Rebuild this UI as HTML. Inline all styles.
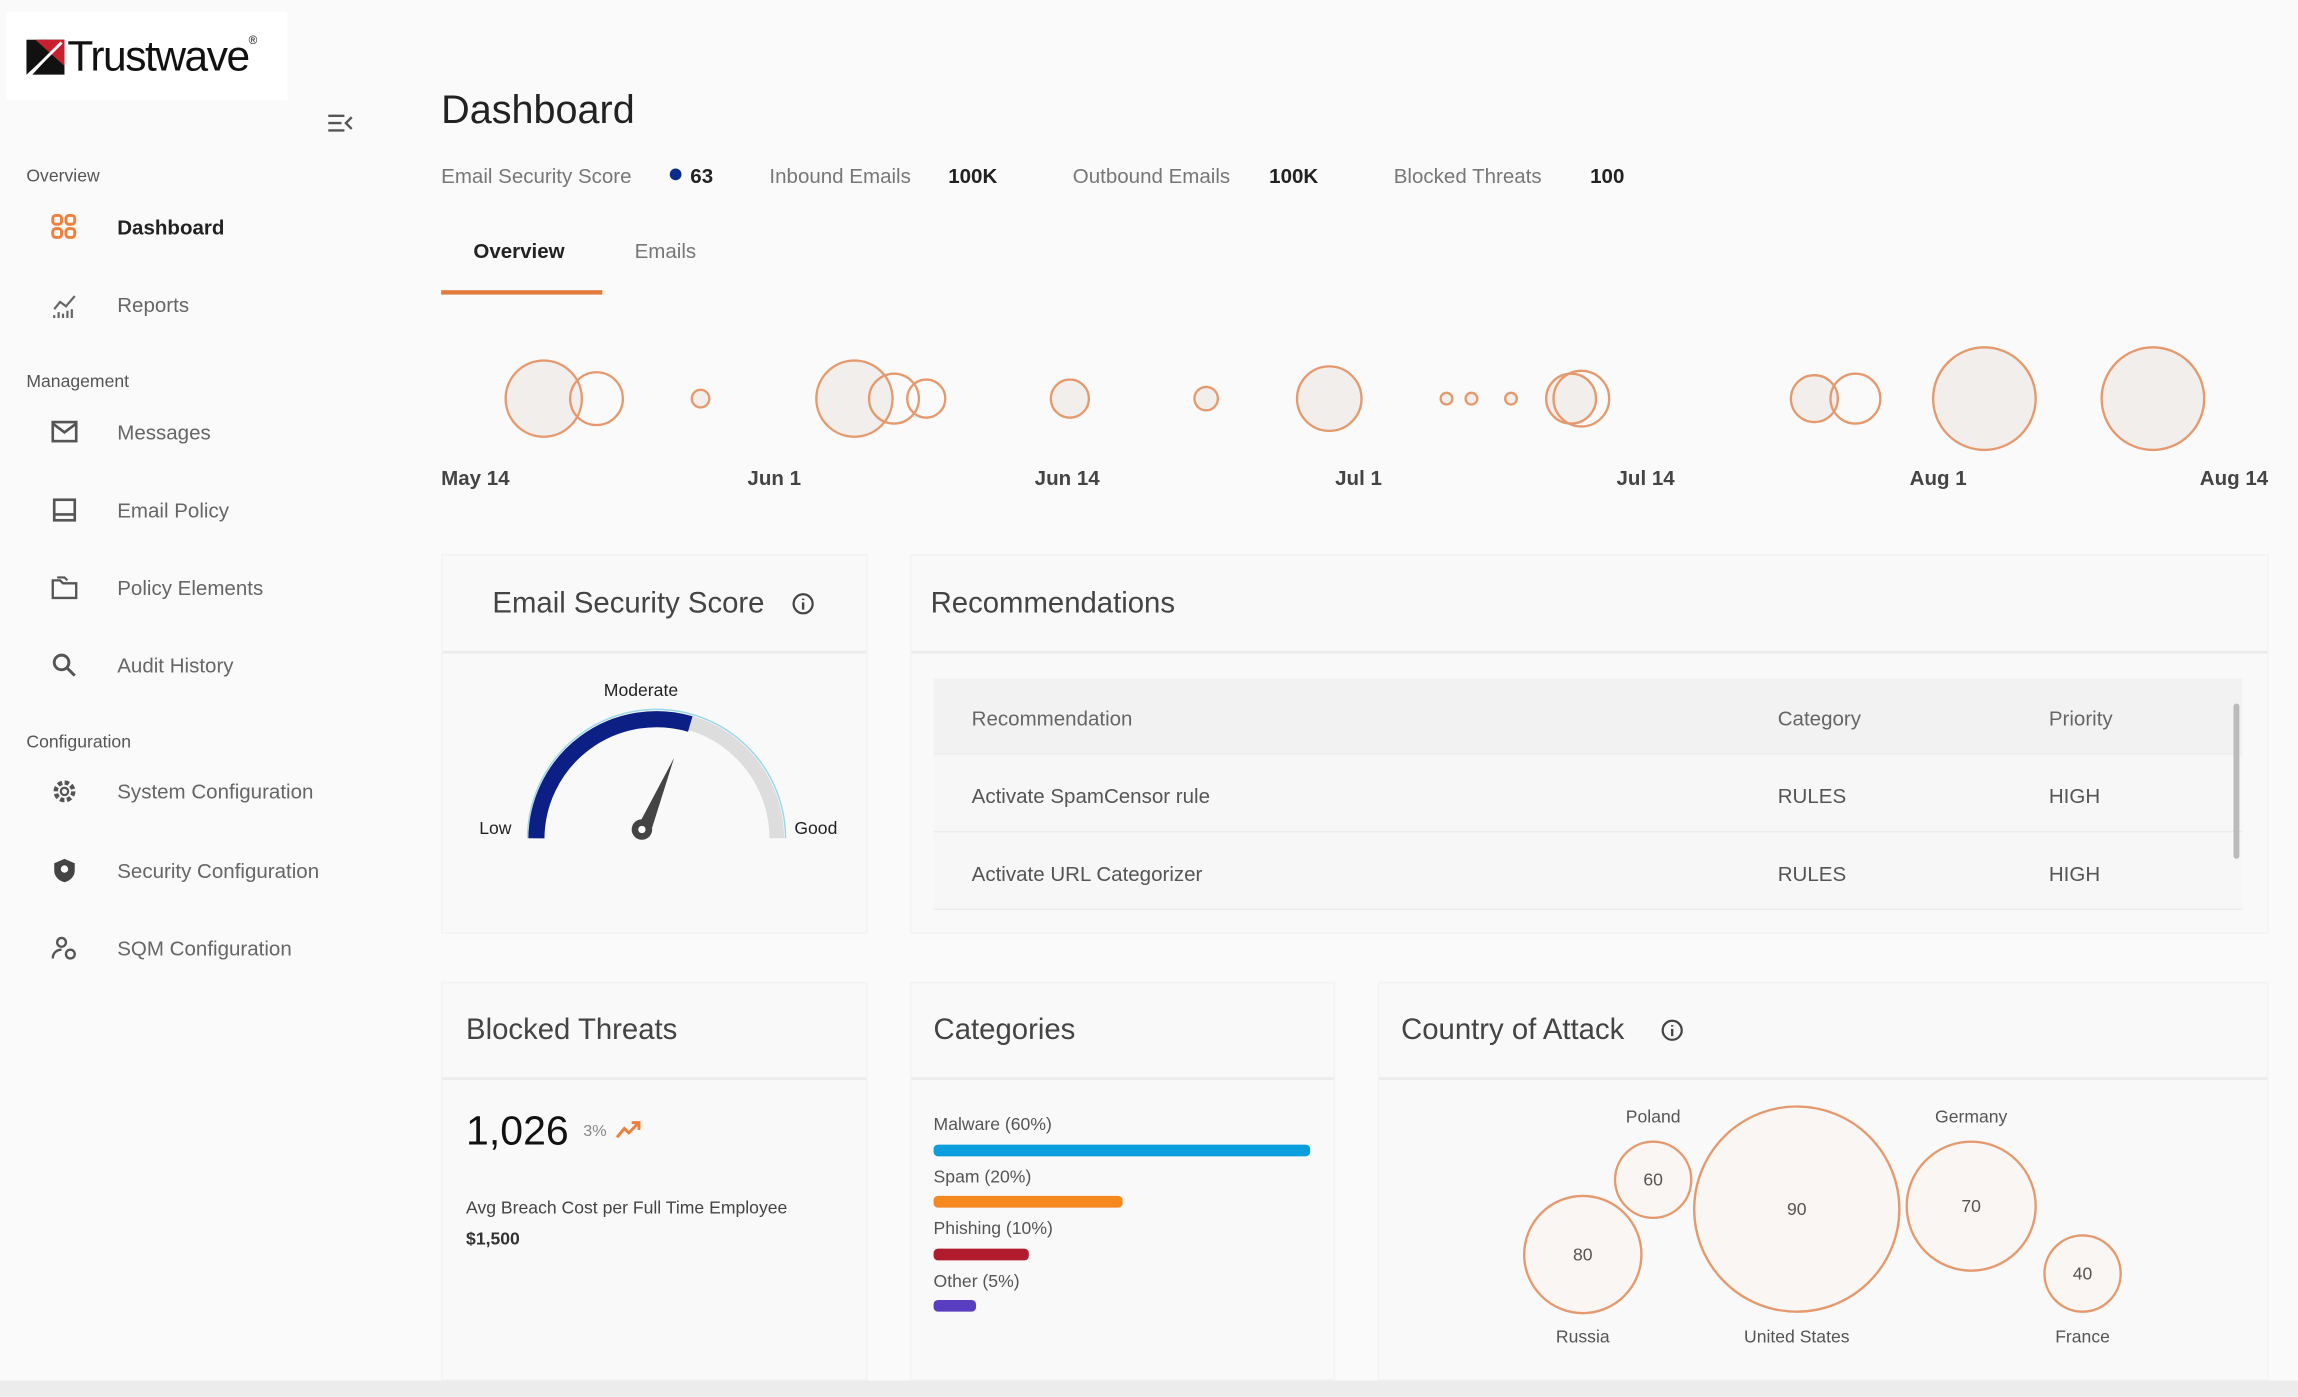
<!DOCTYPE html>
<html><head><meta charset="utf-8"><style>
*{margin:0;padding:0;box-sizing:border-box}
html,body{width:2298px;height:1396px;overflow:hidden;background:#fafafa}
#w{position:absolute;left:0;top:0;width:1568px;height:953px;transform:scale(1.46556);transform-origin:0 0;font-family:"Liberation Sans",sans-serif;color:#333}
.a{position:absolute;white-space:nowrap}
.sec{font-size:12px;color:#555}
.nav{font-size:14px;color:#666}
.ic{position:absolute;width:20px;height:20px}
.card{position:absolute;background:#f9f9f9;border:1px solid #f3f3f3}
.hd{position:absolute;left:0;right:0;border-bottom:2px solid #ececec}
.ct{font-size:20px;color:#444}
.st{font-size:14px;color:#777}
.sv{font-size:14px;font-weight:bold;color:#222}
.lbl{font-size:14px;font-weight:bold;color:#444}
.row{position:absolute;left:637px;width:893px;height:53px;border-bottom:1px solid #ececec}
.td{position:absolute;font-size:14px;color:#555;top:20px}
.cl{font-size:12px;color:#555}
.bar{position:absolute;height:8px;border-radius:3px;left:637px}
</style></head><body><div id="w">
<div class="a" style="left:4px;top:8px;width:192px;height:60px;background:#fff"></div>
<svg class="a" style="left:18px;top:27px" width="26" height="24" viewBox="0 0 26 24"><polygon points="0,0 26,0 0,24" fill="#111"/><polygon points="26,0 26,24 4,24" fill="#111"/><polygon points="6,0 26,0 26,18" fill="#c8202e"/><polygon points="2,24 24,2" stroke="#fff" stroke-width="2"/></svg>
<div class="a" style="left:46px;top:23px;font-size:29px;color:#111;letter-spacing:-1px">Trustwave<span style="font-size:8px;vertical-align:top">®</span></div>
<svg class="a" style="left:223px;top:77px" width="18" height="14"><path d="M1 2h11M1 7h9M1 12h11M17 3l-4 4 4 4" stroke="#555" stroke-width="1.6" fill="none"/></svg>

<div class="a sec" style="left:18px;top:113px">Overview</div>
<svg class="ic" style="left:34px;top:145px" viewBox="0 0 20 20"><g fill="none" stroke="#f07f3c" stroke-width="2"><rect x="2" y="2" width="6" height="6" rx="2"/><rect x="11" y="2" width="6" height="6" rx="2"/><rect x="2" y="11" width="6" height="6" rx="2"/><rect x="11" y="11" width="6" height="6" rx="2"/></g></svg>
<div class="a" style="left:80px;top:147px;font-size:14px;font-weight:bold;color:#222">Dashboard</div>
<svg class="ic" style="left:34px;top:199px" viewBox="0 0 20 20"><g stroke="#666" stroke-width="1.5" fill="none"><path d="M3 12l4-5 4 3 6-7"/><path d="M3 18v-2M6 18v-4M9 18v-3M12 18v-5M15 18v-6"/></g></svg>
<div class="a nav" style="left:80px;top:200px">Reports</div>
<div class="a sec" style="left:18px;top:253px">Management</div>
<svg class="ic" style="left:34px;top:285px" viewBox="0 0 20 20"><rect x="2" y="3" width="16" height="13" fill="none" stroke="#555" stroke-width="1.8"/><path d="M2 4l8 6 8-6" fill="none" stroke="#555" stroke-width="1.8"/></svg>
<div class="a nav" style="left:80px;top:287px">Messages</div>
<svg class="ic" style="left:34px;top:338px" viewBox="0 0 20 20"><rect x="3" y="3" width="14" height="14" fill="none" stroke="#555" stroke-width="1.8"/><path d="M3 13h14" stroke="#555" stroke-width="1.8"/></svg>
<div class="a nav" style="left:80px;top:340px">Email Policy</div>
<svg class="ic" style="left:34px;top:391px" viewBox="0 0 20 20"><path d="M2 5h5l2 2h9v10H2z" fill="none" stroke="#555" stroke-width="1.6"/><path d="M5 3h5l2 2" fill="none" stroke="#555" stroke-width="1.4"/></svg>
<div class="a nav" style="left:80px;top:393px">Policy Elements</div>
<svg class="ic" style="left:34px;top:444px" viewBox="0 0 20 20"><circle cx="8" cy="8" r="5" fill="none" stroke="#555" stroke-width="2"/><path d="M12 12l5 5" stroke="#555" stroke-width="2"/></svg>
<div class="a nav" style="left:80px;top:446px">Audit History</div>
<div class="a sec" style="left:18px;top:499px">Configuration</div>
<svg class="ic" style="left:34px;top:530px" viewBox="0 0 20 20"><circle cx="10" cy="10" r="6" fill="none" stroke="#555" stroke-width="3" stroke-dasharray="3 1.7"/><circle cx="10" cy="10" r="2.5" fill="none" stroke="#555" stroke-width="1.5"/></svg>
<div class="a nav" style="left:80px;top:532px">System Configuration</div>
<svg class="ic" style="left:34px;top:584px" viewBox="0 0 20 20"><path d="M10 2l7 3v5c0 4-3 7-7 8-4-1-7-4-7-8V5z" fill="#444"/><circle cx="10" cy="9" r="2.5" fill="#fff"/></svg>
<div class="a nav" style="left:80px;top:586px">Security Configuration</div>
<svg class="ic" style="left:34px;top:637px" viewBox="0 0 20 20"><circle cx="8" cy="6" r="3" fill="none" stroke="#555" stroke-width="1.6"/><path d="M2 17c0-4 3-6 6-6" fill="none" stroke="#555" stroke-width="1.6"/><circle cx="14" cy="14" r="3" fill="none" stroke="#555" stroke-width="1.6"/></svg>
<div class="a nav" style="left:80px;top:639px">SQM Configuration</div>

<div class="a" style="left:301px;top:60px;font-size:27px;color:#222">Dashboard</div>
<div class="a st" style="left:301px;top:112px">Email Security Score</div>
<div class="a" style="left:457px;top:115px;width:8px;height:8px;border-radius:50%;background:#0b2a8a"></div>
<div class="a sv" style="left:471px;top:112px">63</div>
<div class="a st" style="left:525px;top:112px">Inbound Emails</div>
<div class="a sv" style="left:647px;top:112px">100K</div>
<div class="a st" style="left:732px;top:112px">Outbound Emails</div>
<div class="a sv" style="left:866px;top:112px">100K</div>
<div class="a st" style="left:951px;top:112px">Blocked Threats</div>
<div class="a sv" style="left:1085px;top:112px">100</div>
<div class="a" style="left:323px;top:163px;font-size:14px;font-weight:bold;color:#222">Overview</div>
<div class="a st" style="left:433px;top:163px">Emails</div>
<div class="a" style="left:301px;top:198px;width:110px;height:3px;background:#e07b3c"></div>

<svg class="a" style="left:0;top:0" width="1568" height="340"><g stroke="#e49a6e" stroke-width="1.6" fill="#efebe8" fill-opacity=".8">
<circle cx="371" cy="272" r="26"/><circle cx="407" cy="272" r="18" fill="none"/><circle cx="478" cy="272" r="6"/>
<circle cx="583" cy="272" r="26"/><circle cx="610" cy="272" r="17" fill="none"/><circle cx="632" cy="272" r="13" fill="none"/>
<circle cx="730" cy="272" r="13"/><circle cx="823" cy="272" r="8"/><circle cx="907" cy="272" r="22"/>
<circle cx="987" cy="272" r="4"/><circle cx="1004" cy="272" r="4"/><circle cx="1031" cy="272" r="4"/>
<circle cx="1072" cy="272" r="17"/><circle cx="1079" cy="272" r="19" fill="none"/>
<circle cx="1238" cy="272" r="16"/><circle cx="1266" cy="272" r="17" fill="none"/>
<circle cx="1354" cy="272" r="35"/><circle cx="1469" cy="272" r="35"/></g></svg>
<div class="a lbl" style="left:301px;top:318px">May 14</div>
<div class="a lbl" style="left:510px;top:318px">Jun 1</div>
<div class="a lbl" style="left:706px;top:318px">Jun 14</div>
<div class="a lbl" style="left:911px;top:318px">Jul 1</div>
<div class="a lbl" style="left:1103px;top:318px">Jul 14</div>
<div class="a lbl" style="left:1303px;top:318px">Aug 1</div>
<div class="a lbl" style="left:1501px;top:318px">Aug 14</div>

<div class="card" style="left:301px;top:378px;width:291px;height:259px"><div class="hd" style="top:0;height:67px"></div></div>
<div class="a ct" style="left:336px;top:401px">Email Security Score</div>
<svg class="a" style="left:540px;top:404px" width="16" height="16"><circle cx="8" cy="8" r="6.5" fill="none" stroke="#444" stroke-width="1.5"/><path d="M8 7v5M8 4.5v1" stroke="#444" stroke-width="1.6"/></svg>
<div class="a" style="left:412px;top:464px;font-size:12px;color:#222">Moderate</div>
<div class="a" style="left:327px;top:558px;font-size:12px;color:#222">Low</div>
<div class="a" style="left:542px;top:558px;font-size:12px;color:#222">Good</div>
<svg class="a" style="left:350px;top:475px" width="200" height="105">
<path d="M16 97 A82 82 0 0 1 180 97" fill="none" stroke="#ddd" stroke-width="10"/>
<path d="M16 97 A82 82 0 0 1 121 19" fill="none" stroke="#0b1f85" stroke-width="11"/>
<path d="M10 97 A88 88 0 0 1 186 97" fill="none" stroke="#5bc0de" stroke-width="1" opacity=".6"/>
<path d="M83 93 L110 42 L93 96 Z" fill="#444"/><circle cx="88" cy="91" r="7" fill="#444"/><circle cx="88" cy="91" r="2.5" fill="#fff"/></svg>

<div class="card" style="left:621px;top:378px;width:927px;height:259px"><div class="hd" style="top:0;height:67px"></div></div>
<div class="a ct" style="left:635px;top:401px">Recommendations</div>
<div class="row" style="top:463px;height:52px;background:#f2f2f2"><div class="td" style="left:26px;top:19px;color:#666">Recommendation</div><div class="td" style="left:576px;top:19px;color:#666">Category</div><div class="td" style="left:761px;top:19px;color:#666">Priority</div></div>
<div class="row" style="top:515px;background:#f7f7f7"><div class="td" style="left:26px">Activate SpamCensor rule</div><div class="td" style="left:576px">RULES</div><div class="td" style="left:761px">HIGH</div></div>
<div class="row" style="top:568px;background:#f7f7f7"><div class="td" style="left:26px">Activate URL Categorizer</div><div class="td" style="left:576px">RULES</div><div class="td" style="left:761px">HIGH</div></div>
<div class="a" style="left:1524px;top:480px;width:4px;height:106px;background:#bbb;border-radius:2px"></div>

<div class="card" style="left:301px;top:670px;width:291px;height:272px"><div class="hd" style="top:0;height:66px"></div></div>
<div class="a ct" style="left:318px;top:692px">Blocked Threats</div>
<div class="a" style="left:318px;top:756px;font-size:28px;color:#111">1,026</div>
<div class="a" style="left:398px;top:766px;font-size:11px;color:#888">3%</div>
<svg class="a" style="left:420px;top:764px" width="20" height="14"><path d="M1 12l5-6 3 3 7-7M11 2h5v5" fill="none" stroke="#f07f3c" stroke-width="2"/></svg>
<div class="a" style="left:318px;top:817px;font-size:12px;color:#444">Avg Breach Cost per Full Time Employee</div>
<div class="a" style="left:318px;top:838px;font-size:12px;font-weight:bold;color:#333">$1,500</div>

<div class="card" style="left:621px;top:670px;width:290px;height:272px"><div class="hd" style="top:0;height:66px"></div></div>
<div class="a ct" style="left:637px;top:692px">Categories</div>
<div class="a cl" style="left:637px;top:760px">Malware (60%)</div><div class="bar" style="top:781px;width:257px;background:#0a9fdc"></div>
<div class="a cl" style="left:637px;top:796px">Spam (20%)</div><div class="bar" style="top:816px;width:129px;background:#f5891f"></div>
<div class="a cl" style="left:637px;top:831px">Phishing (10%)</div><div class="bar" style="top:852px;width:65px;background:#b01b2e"></div>
<div class="a cl" style="left:637px;top:867px">Other (5%)</div><div class="bar" style="top:887px;width:29px;background:#5a3ec2"></div>

<div class="card" style="left:940px;top:670px;width:608px;height:272px"><div class="hd" style="top:0;height:66px"></div></div>
<div class="a ct" style="left:956px;top:692px">Country of Attack</div>
<svg class="a" style="left:1133px;top:695px" width="16" height="16"><circle cx="8" cy="8" r="6.5" fill="none" stroke="#444" stroke-width="1.5"/><path d="M8 7v5M8 4.5v1" stroke="#444" stroke-width="1.6"/></svg>
<svg class="a" style="left:940px;top:740px" width="608" height="200" font-family="Liberation Sans" font-size="12" fill="#555" text-anchor="middle"><g stroke="#e49a6e" stroke-width="1.6" fill="#faf6f3">
<circle cx="140" cy="116" r="40"/><circle cx="188" cy="65" r="26"/><circle cx="286" cy="85" r="70"/><circle cx="405" cy="83" r="44"/><circle cx="481" cy="129" r="26"/></g>
<text x="140" y="120">80</text><text x="188" y="69">60</text><text x="286" y="89">90</text><text x="405" y="87">70</text><text x="481" y="133">40</text>
<text x="188" y="26">Poland</text><text x="405" y="26">Germany</text><text x="140" y="176">Russia</text><text x="286" y="176">United States</text><text x="481" y="176">France</text></svg>

<div class="a" style="left:0;top:942px;width:1568px;height:11px;background:#ececec"></div>
</div></body></html>
